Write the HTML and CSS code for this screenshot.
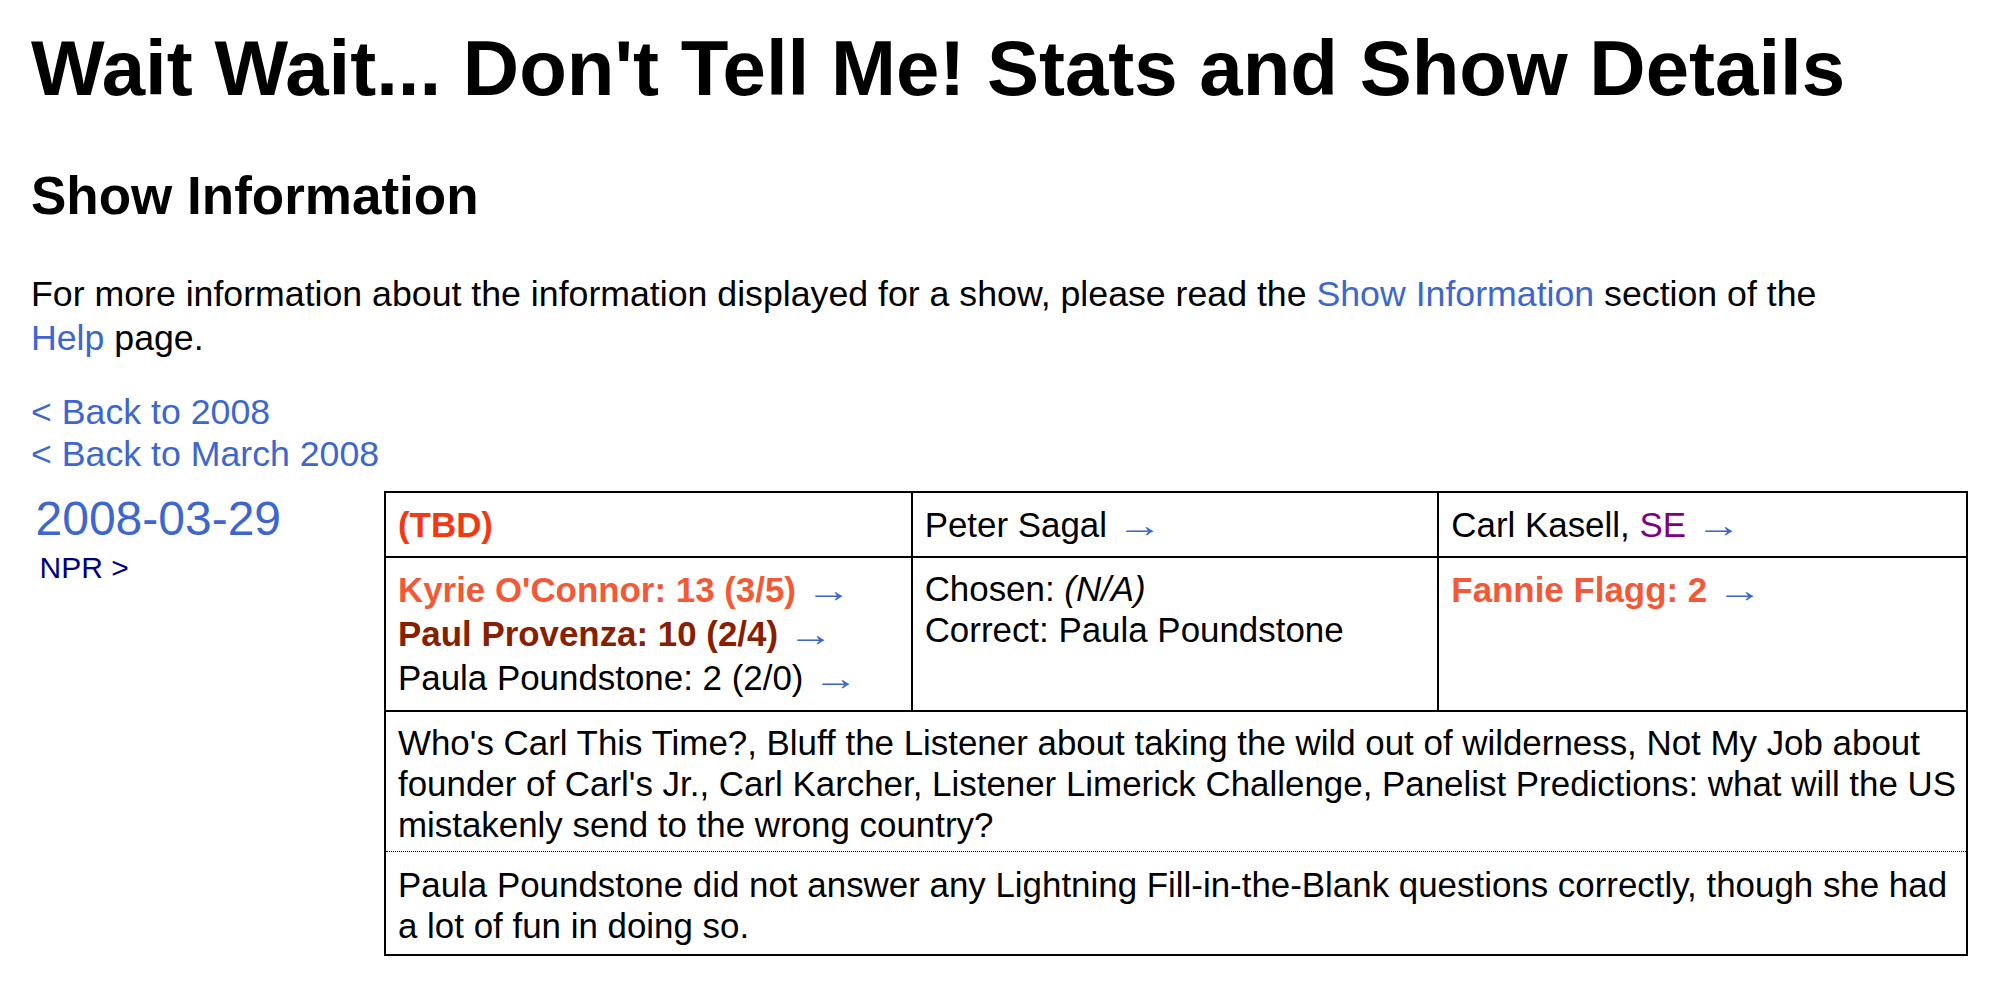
FILE: index.html
```html
<!DOCTYPE html>
<html lang="en">
<head>
<meta charset="utf-8">
<title>Wait Wait... Don't Tell Me! Stats and Show Details</title>
<link rel="stylesheet" href="styles.css">
</head>
<body>
<div class="page">
  <h1 class="title">Wait Wait... Don't Tell Me! Stats and Show Details</h1>
  <h2 class="subtitle">Show Information</h2>
  <p class="intro">For more information about the information displayed for a show, please read the <a href="#">Show Information</a> section of the <a href="#">Help</a> page.</p>
  <div class="backlinks">
    <a href="#">&lt; Back to 2008</a><br>
    <a href="#">&lt; Back to March 2008</a>
  </div>
  <div class="show-row">
    <div class="show-date">
      <a class="date" href="#">2008-03-29</a>
      <a class="npr" href="#">NPR &gt;</a>
    </div>
    <div class="show">
      <div class="cell top"><span class="tbd">(TBD)</span></div>
      <div class="cell top">Peter Sagal <a class="arrow" href="#">→</a></div>
      <div class="cell top last">Carl Kasell, <span class="se">SE</span> <a class="arrow" href="#">→</a></div>
      <div class="cell">
        <div class="panelist first">Kyrie O'Connor: 13 (3/5) <a class="arrow" href="#">→</a></div>
        <div class="panelist second">Paul Provenza: 10 (2/4) <a class="arrow" href="#">→</a></div>
        <div class="panelist">Paula Poundstone: 2 (2/0) <a class="arrow" href="#">→</a></div>
      </div>
      <div class="cell">
        <div>Chosen: <em>(N/A)</em></div>
        <div>Correct: Paula Poundstone</div>
      </div>
      <div class="cell last">
        <div class="panelist guest">Fannie Flagg: 2 <a class="arrow" href="#">→</a></div>
      </div>
      <div class="cell wide notes">Who's Carl This Time?, Bluff the Listener about taking the wild out of wilderness, Not My Job about founder of Carl's Jr., Carl Karcher, Listener Limerick Challenge, Panelist Predictions: what will the US mistakenly send to the wrong country?</div>
      <div class="cell wide desc">Paula Poundstone did not answer any Lightning Fill-in-the-Blank questions correctly, though she had a lot of fun in doing so.</div>
    </div>
  </div>
</div>
</body>
</html>
```

FILE: styles.css
```css
html, body {
  margin: 0;
  padding: 0;
  background: #ffffff;
}

body {
  font-family: "Liberation Sans", Arial, Helvetica, sans-serif;
  font-size: 35.7px;
  line-height: 41px;
  color: #000000;
}

.page {
  padding: 24px 26px 0 31px;
}

a {
  color: #3d66cf;
  text-decoration: none;
}

.title {
  font-size: 78px;
  line-height: 1.15;
  font-weight: bold;
  margin: 0;
}

.subtitle {
  font-size: 53px;
  line-height: 1.15;
  font-weight: bold;
  margin: 52px 0 0 0;
}

.intro {
  margin: 45.5px 0 0 0;
  line-height: 44px;
  max-width: 1815px;
}

.backlinks {
  margin-top: 31.3px;
  line-height: 42px;
}

.show-row {
  display: flex;
  align-items: flex-start;
  margin-top: 15.2px;
}

.show-date {
  width: 353px;
  flex: none;
  display: flex;
  flex-direction: column;
  padding-left: 4.5px;
  box-sizing: border-box;
}

.date {
  font-size: 48px;
  line-height: 56px;
}

.npr {
  font-size: 30px;
  line-height: 41px;
  color: #00007f;
  padding-left: 4px;
}

.show {
  width: 1584px;
  flex: none;
  box-sizing: border-box;
  border: 2px solid #000000;
  display: grid;
  grid-template-columns: repeat(3, 1fr);
  font-size: 34.9px;
}

.cell {
  padding: 10px 12px;
  border-right: 2px solid #000000;
  border-bottom: 2px solid #000000;
}

.cell.top {
  line-height: 43px;
}

.panelist {
  line-height: 44px;
}

.cell.last {
  border-right: none;
}

.cell.wide {
  grid-column: 1 / -1;
  border-right: none;
}

.notes {
  padding: 10.5px 6px 5.5px 12px;
  border-bottom: 1px dotted #000000;
}

.desc {
  padding: 12px 6px 8.5px 12px;
  border-bottom: none;
}

.tbd {
  color: #f23a12;
  font-weight: bold;
}

.se {
  color: #80007f;
}

.first, .guest {
  color: #f25a37;
  font-weight: bold;
}

.second {
  color: #862000;
  font-weight: bold;
}

.arrow {
  display: inline-block;
  font-weight: normal;
  color: #3d66cf;
  transform: scaleX(1.3);
  transform-origin: left center;
}
```
